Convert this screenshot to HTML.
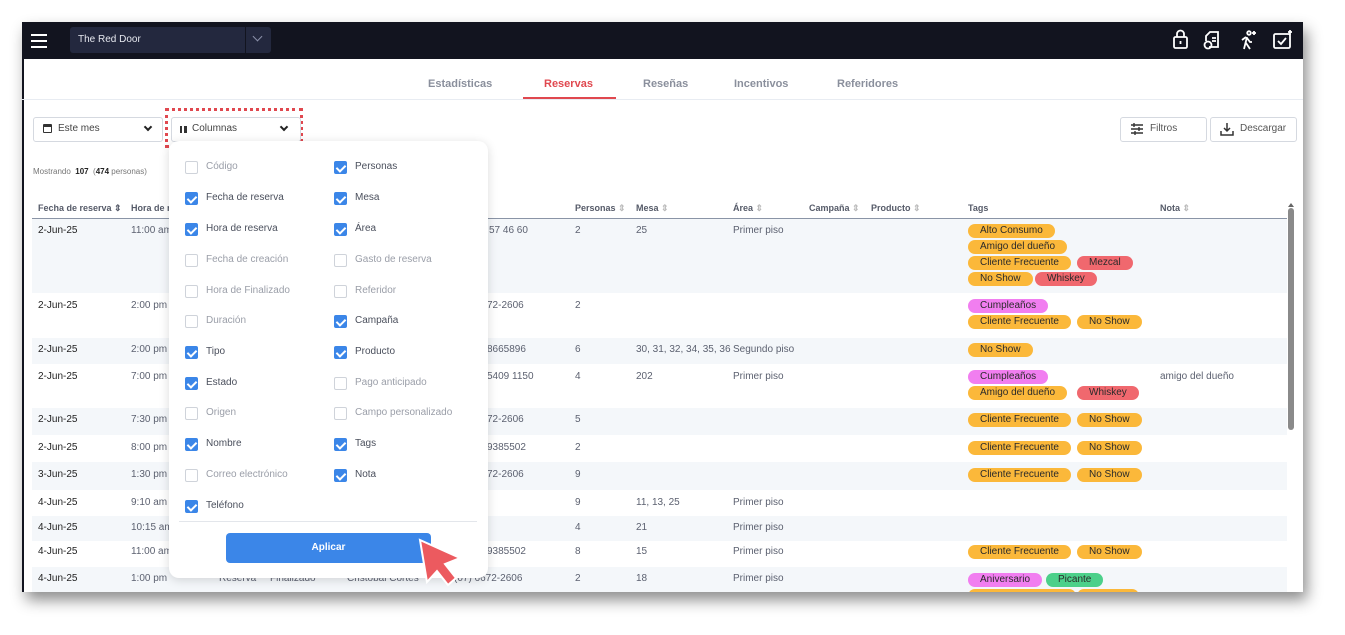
<!DOCTYPE html>
<html><head><meta charset="utf-8"><style>
*{box-sizing:border-box;margin:0;padding:0}
body{width:1345px;height:635px;background:#fff;position:relative;overflow:hidden;font-family:"Liberation Sans",sans-serif;color:#3d4250}
.a{position:absolute;white-space:nowrap}
#win{position:absolute;left:22px;top:22px;width:1281px;height:570px;background:#fff;box-shadow:4px 8px 14px rgba(0,0,0,.45);overflow:hidden}
.t{font-size:10px;color:#5c6170}
.h{font-size:9px;font-weight:bold;color:#555a68}
.d{font-size:10px;color:#222;}
.tag{position:absolute;height:14px;line-height:14px;border-radius:7px;font-size:10px;color:#2a2a2a;padding:0 12px;white-space:nowrap}
.o{background:#fbb83a}.r{background:#f0686e}.p{background:#f17ef0}.g{background:#4cd08a}
.cb{position:absolute;width:13px;height:13px;border:1px solid #cfd3da;border-radius:2px;background:#fff}
.cb.on{background:#3b86e8;border-color:#3b86e8}
.cb.on:after{content:"";position:absolute;left:3px;top:1px;width:4px;height:7px;border:solid #fff;border-width:0 2px 2px 0;transform:rotate(45deg)}
.lb{position:absolute;font-size:10px;color:#4a4f5c;white-space:nowrap}
.lb.off{color:#9a9ea8}
</style></head><body>
<div id="win">
<div class="a" style="left:0;top:0;width:2px;height:570px;background:#12141f"></div>
<!-- top bar -->
<div class="a" style="left:0;top:0;width:1281px;height:37px;background:#12141f"></div>
<div class="a" style="left:9px;top:12px;width:16px;height:2px;background:#fff;box-shadow:0 6px 0 #fff,0 12px 0 #fff"></div>
<div class="a" style="left:48px;top:5px;width:201px;height:26px;background:#23283e;border-radius:3px"></div>
<div class="a" style="left:223px;top:5px;width:1px;height:26px;background:#12141f"></div>
<div class="a" style="left:56px;top:12px;font-size:10px;color:#e6e8ef">The Red Door</div>
<div class="a" style="left:232px;top:11px;width:7px;height:7px;border:solid #8a90a8;border-width:0 1.5px 1.5px 0;transform:rotate(45deg)"></div>
<svg class="a" style="left:1148px;top:6px" width="130" height="24" fill="none" stroke="#fff" stroke-width="1.8">
<rect x="4" y="9" width="13" height="11" rx="1.5"/><path d="M7 9V6a3.5 3.5 0 0 1 7 0v3"/><path d="M10.5 13v3"/>
<path d="M39 19h9V4h-8l-4 4v5"/><circle cx="38" cy="17" r="3.5"/><path d="M42 10h4M42 13h4"/>
<circle cx="79" cy="5" r="1.8"/><path d="M77 9l-3 12M77 10l3 4 2 0M76 15l4 6M72 12l4-3"/><path d="M84 3v4M82 5h4"/>
<rect x="104" y="6" width="16" height="14" rx="1.5"/><path d="M108 13l3 3 5-6M120 2v5M118 4h4"/>
</svg>
<!-- tabs -->
<div class="a" style="left:0;top:77px;width:1281px;height:1px;background:#e8ecf2"></div>
<div class="a" style="left:406px;top:56px;font-size:11px;font-weight:bold;color:#8a8f9c">Estadísticas</div>
<div class="a" style="left:522px;top:56px;font-size:11px;font-weight:bold;color:#e0484f">Reservas</div>
<div class="a" style="left:501px;top:75px;width:93px;height:2px;background:#e0484f"></div>
<div class="a" style="left:621px;top:56px;font-size:11px;font-weight:bold;color:#8a8f9c">Reseñas</div>
<div class="a" style="left:712px;top:56px;font-size:11px;font-weight:bold;color:#8a8f9c">Incentivos</div>
<div class="a" style="left:815px;top:56px;font-size:11px;font-weight:bold;color:#8a8f9c">Referidores</div>
<!-- controls -->
<div class="a" style="left:11px;top:95px;width:130px;height:25px;border:1px solid #d5d9e0;border-radius:3px"></div>
<div class="a" style="left:21px;top:102px;width:9px;height:9px;border:1.5px solid #333;border-radius:1px;border-top-width:3px"></div>
<div class="a" style="left:36px;top:101px;font-size:10px;color:#444">Este mes</div>
<div class="a" style="left:123px;top:102px;width:6px;height:6px;border:solid #222;border-width:0 2px 2px 0;transform:rotate(45deg)"></div>
<div class="a" style="left:143px;top:86px;width:138px;height:40px;border:3px dotted #e0484f"></div>
<div class="a" style="left:149px;top:95px;width:130px;height:25px;border:1px solid #d5d9e0;border-radius:3px;background:#fff"></div>
<div class="a" style="left:158px;top:104px;width:7px;height:7px;border-left:2px solid #333;border-right:2px solid #333"><div style="margin-left:1.5px;width:2px;height:7px;background:#333"></div></div>
<div class="a" style="left:170px;top:101px;font-size:10px;color:#444">Columnas</div>
<div class="a" style="left:259px;top:102px;width:6px;height:6px;border:solid #222;border-width:0 2px 2px 0;transform:rotate(45deg)"></div>
<div class="a" style="left:1098px;top:95px;width:87px;height:25px;border:1px solid #d5d9e0;border-radius:3px"></div>
<svg class="a" style="left:1108px;top:100px" width="14" height="14" stroke="#333" stroke-width="1.4"><path d="M1 3h12M1 7h12M1 11h12"/><path d="M4 1v4M9 5v4M5 9v4"/></svg>
<div class="a" style="left:1128px;top:101px;font-size:10px;color:#555">Filtros</div>
<div class="a" style="left:1188px;top:95px;width:87px;height:25px;border:1px solid #d5d9e0;border-radius:3px"></div>
<svg class="a" style="left:1198px;top:100px" width="14" height="14" stroke="#333" stroke-width="1.5" fill="none"><path d="M7 1v8M4 6l3 3 3-3M1 9v4h12V9"/></svg>
<div class="a" style="left:1218px;top:101px;font-size:10px;color:#555">Descargar</div>
<div class="a" style="left:11px;top:145px;font-size:8px;color:#777">Mostrando &nbsp;<b style="color:#222">107</b> &nbsp;(<b style="color:#222">474</b> personas)</div>
<!-- table header -->
<div class="a" style="left:10px;top:196px;width:1255px;height:1px;background:#8a94a6"></div>
<div class="a h" style="left:16px;top:181px">Fecha de reserva ⇕</div>
<div class="a h" style="left:109px;top:181px">Hora de r</div>
<div class="a h" style="left:553px;top:181px">Personas <span style="color:#bbb">⇕</span></div>
<div class="a h" style="left:614px;top:181px">Mesa <span style="color:#bbb">⇕</span></div>
<div class="a h" style="left:711px;top:181px">Área <span style="color:#bbb">⇕</span></div>
<div class="a h" style="left:787px;top:181px">Campaña <span style="color:#bbb">⇕</span></div>
<div class="a h" style="left:849px;top:181px">Producto <span style="color:#bbb">⇕</span></div>
<div class="a h" style="left:946px;top:181px">Tags</div>
<div class="a h" style="left:1138px;top:181px">Nota <span style="color:#bbb">⇕</span></div>
<!-- row backgrounds -->
<div class="a" style="left:10px;top:197px;width:1255px;height:74px;background:#f4f7fa"></div>
<div class="a" style="left:10px;top:316px;width:1255px;height:26px;background:#f4f7fa"></div>
<div class="a" style="left:10px;top:386px;width:1255px;height:27px;background:#f4f7fa"></div>
<div class="a" style="left:10px;top:440px;width:1255px;height:28px;background:#f4f7fa"></div>
<div class="a" style="left:10px;top:494px;width:1255px;height:25px;background:#f4f7fa"></div>
<div class="a" style="left:10px;top:545px;width:1255px;height:25px;background:#f4f7fa"></div>
<!-- scrollbar -->
<div class="a" style="left:1266px;top:178px;width:0;height:0;border:3px solid transparent;border-bottom:4px solid #666"></div>
<div class="a" style="left:1266px;top:186px;width:6px;height:222px;background:#8a8a8a;border-radius:3px"></div>
<!-- rows -->
<div class="a d" style="left:16px;top:203px">2-Jun-25</div><div class="a t" style="left:109px;top:203px">11:00 am</div><div class="a t" style="left:467px;top:203px">57 46 60</div><div class="a t" style="left:553px;top:203px">2</div><div class="a t" style="left:614px;top:203px">25</div><div class="a t" style="left:711px;top:203px">Primer piso</div>
<div class="a d" style="left:16px;top:278px">2-Jun-25</div><div class="a t" style="left:109px;top:278px">2:00 pm</div><div class="a t" style="left:465px;top:278px">72-2606</div><div class="a t" style="left:553px;top:278px">2</div>
<div class="a d" style="left:16px;top:322px">2-Jun-25</div><div class="a t" style="left:109px;top:322px">2:00 pm</div><div class="a t" style="left:465px;top:322px">8665896</div><div class="a t" style="left:553px;top:322px">6</div><div class="a t" style="left:614px;top:322px">30, 31, 32, 34, 35, 36</div><div class="a t" style="left:711px;top:322px">Segundo piso</div>
<div class="a d" style="left:16px;top:349px">2-Jun-25</div><div class="a t" style="left:109px;top:349px">7:00 pm</div><div class="a t" style="left:465px;top:349px">5409 1150</div><div class="a t" style="left:553px;top:349px">4</div><div class="a t" style="left:614px;top:349px">202</div><div class="a t" style="left:711px;top:349px">Primer piso</div><div class="a t" style="left:1138px;top:349px">amigo del dueño</div>
<div class="a d" style="left:16px;top:392px">2-Jun-25</div><div class="a t" style="left:109px;top:392px">7:30 pm</div><div class="a t" style="left:465px;top:392px">72-2606</div><div class="a t" style="left:553px;top:392px">5</div>
<div class="a d" style="left:16px;top:420px">2-Jun-25</div><div class="a t" style="left:109px;top:420px">8:00 pm</div><div class="a t" style="left:465px;top:420px">9385502</div><div class="a t" style="left:553px;top:420px">2</div>
<div class="a d" style="left:16px;top:447px">3-Jun-25</div><div class="a t" style="left:109px;top:447px">1:30 pm</div><div class="a t" style="left:465px;top:447px">72-2606</div><div class="a t" style="left:553px;top:447px">9</div>
<div class="a d" style="left:16px;top:475px">4-Jun-25</div><div class="a t" style="left:109px;top:475px">9:10 am</div><div class="a t" style="left:553px;top:475px">9</div><div class="a t" style="left:614px;top:475px">11, 13, 25</div><div class="a t" style="left:711px;top:475px">Primer piso</div>
<div class="a d" style="left:16px;top:500px">4-Jun-25</div><div class="a t" style="left:109px;top:500px">10:15 am</div><div class="a t" style="left:553px;top:500px">4</div><div class="a t" style="left:614px;top:500px">21</div><div class="a t" style="left:711px;top:500px">Primer piso</div>
<div class="a d" style="left:16px;top:524px">4-Jun-25</div><div class="a t" style="left:109px;top:524px">11:00 am</div><div class="a t" style="left:465px;top:524px">9385502</div><div class="a t" style="left:553px;top:524px">8</div><div class="a t" style="left:614px;top:524px">15</div><div class="a t" style="left:711px;top:524px">Primer piso</div>
<div class="a d" style="left:16px;top:551px">4-Jun-25</div><div class="a t" style="left:109px;top:551px">1:00 pm</div><div class="a t" style="left:197px;top:551px">Reserva</div><div class="a t" style="left:248px;top:551px">Finalizado</div><div class="a t" style="left:325px;top:551px">Cristobal Cortes</div><div class="a t" style="left:432px;top:551px">(07) 6672-2606</div><div class="a t" style="left:553px;top:551px">2</div><div class="a t" style="left:614px;top:551px">18</div><div class="a t" style="left:711px;top:551px">Primer piso</div>
<!-- tags -->
<div class="tag o" style="left:946px;top:202px">Alto Consumo</div>
<div class="tag o" style="left:946px;top:218px">Amigo del dueño</div>
<div class="tag o" style="left:946px;top:234px">Cliente Frecuente</div><div class="tag r" style="left:1055px;top:234px">Mezcal</div>
<div class="tag o" style="left:946px;top:250px">No Show</div><div class="tag r" style="left:1013px;top:250px">Whiskey</div>
<div class="tag p" style="left:946px;top:277px">Cumpleaños</div>
<div class="tag o" style="left:946px;top:293px">Cliente Frecuente</div><div class="tag o" style="left:1055px;top:293px">No Show</div>
<div class="tag o" style="left:946px;top:321px">No Show</div>
<div class="tag p" style="left:946px;top:348px">Cumpleaños</div>
<div class="tag o" style="left:946px;top:364px">Amigo del dueño</div><div class="tag r" style="left:1055px;top:364px">Whiskey</div>
<div class="tag o" style="left:946px;top:391px">Cliente Frecuente</div><div class="tag o" style="left:1055px;top:391px">No Show</div>
<div class="tag o" style="left:946px;top:419px">Cliente Frecuente</div><div class="tag o" style="left:1055px;top:419px">No Show</div>
<div class="tag o" style="left:946px;top:446px">Cliente Frecuente</div><div class="tag o" style="left:1055px;top:446px">No Show</div>
<div class="tag o" style="left:946px;top:523px">Cliente Frecuente</div><div class="tag o" style="left:1055px;top:523px">No Show</div>
<div class="tag p" style="left:946px;top:551px">Aniversario</div><div class="tag g" style="left:1024px;top:551px">Picante</div>
<div class="tag o" style="left:946px;top:567px;width:108px">&nbsp;</div><div class="tag o" style="left:1055px;top:567px;width:62px">&nbsp;</div>
<!-- popup -->
<div class="a" style="left:147px;top:119px;width:319px;height:437px;background:#fff;border-radius:10px;box-shadow:0 2px 10px rgba(0,0,0,.15)"></div>
<div class="a" style="left:157px;top:499px;width:298px;height:1px;background:#e3e6eb"></div>
<div class="a" style="left:204px;top:511px;width:205px;height:30px;background:#3b86e8;border-radius:4px;color:#fff;font-size:10px;font-weight:bold;text-align:center;line-height:30px">Aplicar</div>
</div>
<!-- checkboxes in page coords -->
<div class="cb" style="left:185px;top:161px"></div><div class="lb off" style="left:206px;top:161px">Código</div>
<div class="cb on" style="left:185px;top:192px"></div><div class="lb" style="left:206px;top:192px">Fecha de reserva</div>
<div class="cb on" style="left:185px;top:223px"></div><div class="lb" style="left:206px;top:223px">Hora de reserva</div>
<div class="cb" style="left:185px;top:254px"></div><div class="lb off" style="left:206px;top:254px">Fecha de creación</div>
<div class="cb" style="left:185px;top:285px"></div><div class="lb off" style="left:206px;top:285px">Hora de Finalizado</div>
<div class="cb" style="left:185px;top:315px"></div><div class="lb off" style="left:206px;top:315px">Duración</div>
<div class="cb on" style="left:185px;top:346px"></div><div class="lb" style="left:206px;top:346px">Tipo</div>
<div class="cb on" style="left:185px;top:377px"></div><div class="lb" style="left:206px;top:377px">Estado</div>
<div class="cb" style="left:185px;top:407px"></div><div class="lb off" style="left:206px;top:407px">Origen</div>
<div class="cb on" style="left:185px;top:438px"></div><div class="lb" style="left:206px;top:438px">Nombre</div>
<div class="cb" style="left:185px;top:469px"></div><div class="lb off" style="left:206px;top:469px">Correo electrónico</div>
<div class="cb on" style="left:185px;top:500px"></div><div class="lb" style="left:206px;top:500px">Teléfono</div>
<div class="cb on" style="left:334px;top:161px"></div><div class="lb" style="left:355px;top:161px">Personas</div>
<div class="cb on" style="left:334px;top:192px"></div><div class="lb" style="left:355px;top:192px">Mesa</div>
<div class="cb on" style="left:334px;top:223px"></div><div class="lb" style="left:355px;top:223px">Área</div>
<div class="cb" style="left:334px;top:254px"></div><div class="lb off" style="left:355px;top:254px">Gasto de reserva</div>
<div class="cb" style="left:334px;top:285px"></div><div class="lb off" style="left:355px;top:285px">Referidor</div>
<div class="cb on" style="left:334px;top:315px"></div><div class="lb" style="left:355px;top:315px">Campaña</div>
<div class="cb on" style="left:334px;top:346px"></div><div class="lb" style="left:355px;top:346px">Producto</div>
<div class="cb" style="left:334px;top:377px"></div><div class="lb off" style="left:355px;top:377px">Pago anticipado</div>
<div class="cb" style="left:334px;top:407px"></div><div class="lb off" style="left:355px;top:407px">Campo personalizado</div>
<div class="cb on" style="left:334px;top:438px"></div><div class="lb" style="left:355px;top:438px">Tags</div>
<div class="cb on" style="left:334px;top:469px"></div><div class="lb" style="left:355px;top:469px">Nota</div>
<!-- cursor -->
<svg class="a" style="left:412px;top:538px" width="52" height="54"><path d="M8 2 L48 20 L33 26 L44 40 L36 47 L25 33 L15 44 Z" fill="#ec5a5f" stroke="#fff" stroke-width="2"/></svg>
</body></html>
